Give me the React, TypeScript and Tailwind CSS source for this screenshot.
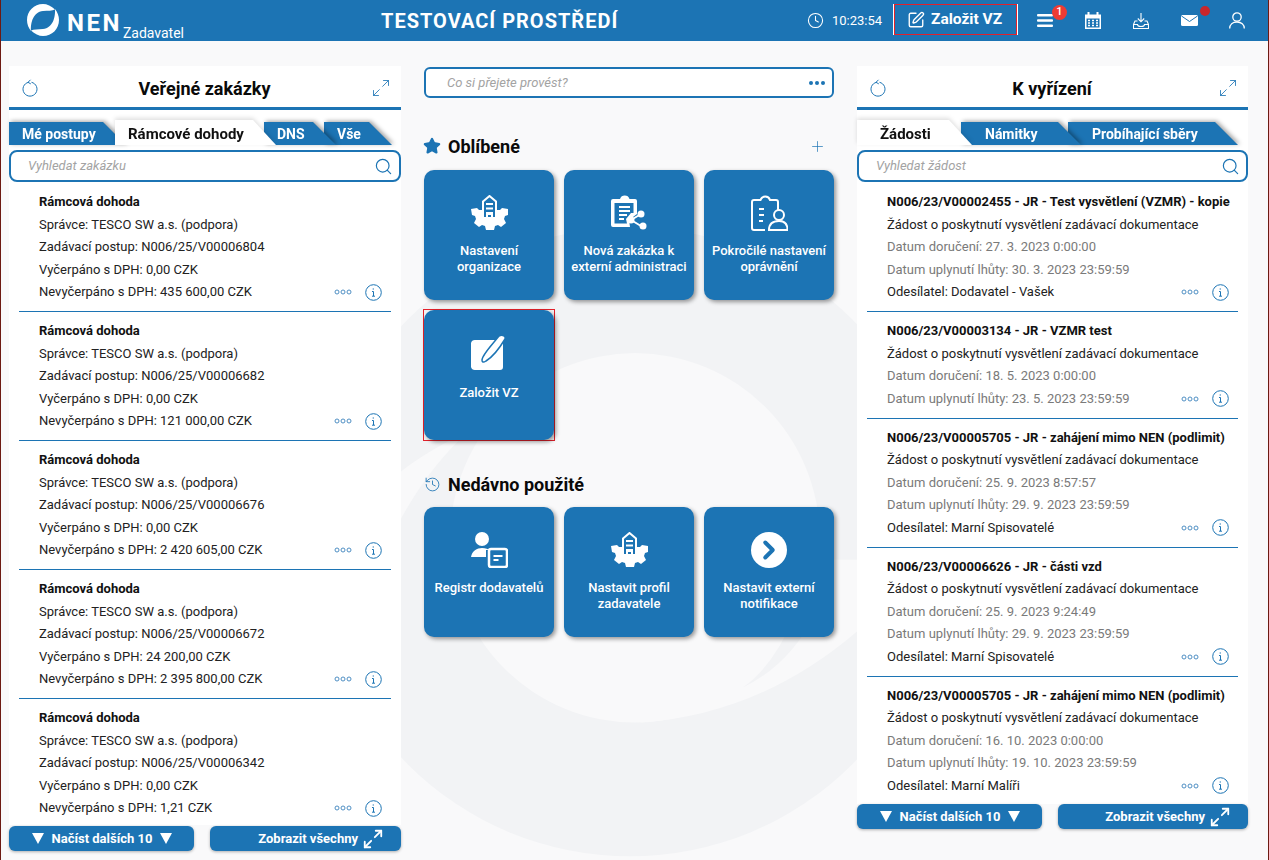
import { Clock, SquarePen, Search, Plus, Star, History, ChevronRight, Maximize2 } from 'lucide-react';

const BLUE = '#1c74b4';

type Row = { title: string; lines: string[]; last: string };

const leftRows: Row[] = [
  { title: 'Rámcová dohoda', lines: ['Správce: TESCO SW a.s. (podpora)', 'Zadávací postup: N006/25/V00006804', 'Vyčerpáno s DPH: 0,00 CZK'], last: 'Nevyčerpáno s DPH: 435 600,00 CZK' },
  { title: 'Rámcová dohoda', lines: ['Správce: TESCO SW a.s. (podpora)', 'Zadávací postup: N006/25/V00006682', 'Vyčerpáno s DPH: 0,00 CZK'], last: 'Nevyčerpáno s DPH: 121 000,00 CZK' },
  { title: 'Rámcová dohoda', lines: ['Správce: TESCO SW a.s. (podpora)', 'Zadávací postup: N006/25/V00006676', 'Vyčerpáno s DPH: 0,00 CZK'], last: 'Nevyčerpáno s DPH: 2 420 605,00 CZK' },
  { title: 'Rámcová dohoda', lines: ['Správce: TESCO SW a.s. (podpora)', 'Zadávací postup: N006/25/V00006672', 'Vyčerpáno s DPH: 24 200,00 CZK'], last: 'Nevyčerpáno s DPH: 2 395 800,00 CZK' },
  { title: 'Rámcová dohoda', lines: ['Správce: TESCO SW a.s. (podpora)', 'Zadávací postup: N006/25/V00006342', 'Vyčerpáno s DPH: 0,00 CZK'], last: 'Nevyčerpáno s DPH: 1,21 CZK' },
];

const ZADOST = 'Žádost o poskytnutí vysvětlení zadávací dokumentace';

const rightRows: { title: string; sub: string; dates: string[]; last?: string }[] = [
  { title: 'N006/23/V00002455 - JR - Test vysvětlení (VZMR) - kopie', sub: ZADOST, dates: ['Datum doručení: 27. 3. 2023 0:00:00', 'Datum uplynutí lhůty: 30. 3. 2023 23:59:59'], last: 'Odesílatel: Dodavatel - Vašek' },
  { title: 'N006/23/V00003134 - JR - VZMR test', sub: ZADOST, dates: ['Datum doručení: 18. 5. 2023 0:00:00', 'Datum uplynutí lhůty: 23. 5. 2023 23:59:59'] },
  { title: 'N006/23/V00005705 - JR - zahájení mimo NEN (podlimit)', sub: ZADOST, dates: ['Datum doručení: 25. 9. 2023 8:57:57', 'Datum uplynutí lhůty: 29. 9. 2023 23:59:59'], last: 'Odesílatel: Marní Spisovatelé' },
  { title: 'N006/23/V00006626 - JR - části vzd', sub: ZADOST, dates: ['Datum doručení: 25. 9. 2023 9:24:49', 'Datum uplynutí lhůty: 29. 9. 2023 23:59:59'], last: 'Odesílatel: Marní Spisovatelé' },
  { title: 'N006/23/V00005705 - JR - zahájení mimo NEN (podlimit)', sub: ZADOST, dates: ['Datum doručení: 16. 10. 2023 0:00:00', 'Datum uplynutí lhůty: 19. 10. 2023 23:59:59'], last: 'Odesílatel: Marní Malíři' },
];

function NenLogo() {
  const swoosh = 'M28 5.500C24.500 2 20 0 16 0 7 0 0 7 0 16c0 4 1.500 8 4 11-.5-8 2-19 12-20 5-.5 9 0 12-1.500z';
  return (
    <svg width="32" height="32" viewBox="0 0 32 32" fill="white" aria-hidden>
      <path d={swoosh} />
      <path d={swoosh} transform="rotate(180 16 16)" />
    </svg>
  );
}

// big faded logo behind the panels
function Watermark() {
  return (
    <svg className="absolute left-0 top-0 h-full w-full" viewBox="0 0 1269 860" aria-hidden>
      <circle cx="630" cy="542" r="315" fill="#f2f3f5" />
      <circle cx="635" cy="538" r="185" fill="#f9f9fa" />
      <path d="M640 723Q760 715 857 632L900 560H800z" fill="#f9f9fa" />
      <path d="M743 688Q790 665 815 615L795 615Q775 665 743 688z" fill="#f2f3f5" />
      <path d="M400 472Q425 452 470 430Q430 465 400 520z" fill="#f9f9fa" />
    </svg>
  );
}

function MenuBars() {
  return (
    <svg width="16" height="13" viewBox="0 0 16 13" fill="white" aria-hidden>
      <rect width="16" height="2.500" rx="1" />
      <rect y="5.250" width="16" height="2.500" rx="1" />
      <rect y="10.500" width="16" height="2.500" rx="1" />
    </svg>
  );
}

function CalendarIcon() {
  return (
    <svg width="16" height="17" viewBox="0 0 16 17" fill="none" aria-hidden>
      <path d="M0 2.500h16V17H0z" fill="white" />
      <path d="M3.500 0v4M12.500 0v4" stroke="white" strokeWidth="2" />
      <path d="M1.500 6.500h13v9h-13z" fill={BLUE} />
      <path d="M3 8.500h2M7 8.500h2M11 8.500h2M3 11h2M7 11h2M11 11h2M3 13.500h2M7 13.500h2M11 13.500h2" stroke="white" strokeWidth="1.300" />
    </svg>
  );
}

function TrayDownload() {
  return (
    <svg width="16" height="16" viewBox="0 0 16 16" fill="none" stroke="white" strokeWidth="1.100" aria-hidden>
      <path d="M8 0v8.500M4.800 5.500 8 8.800l3.200-3.300" />
      <path d="M4.500 8H2L.5 11.500V15.500h15v-4L14 8h-2.500" />
      <path d="M.5 11.500h4c0 1.500 1 2 3.500 2s3.500-.5 3.500-2h4" />
    </svg>
  );
}

function MailIcon() {
  return (
    <svg width="17" height="11" viewBox="0 0 17 11" fill="none" aria-hidden>
      <rect width="17" height="11" rx="1.500" fill="white" />
      <path d="M.5 1 8.500 6.500 16.500 1" stroke={BLUE} strokeWidth="1" />
    </svg>
  );
}

function UserIcon() {
  return (
    <svg width="16" height="17" viewBox="0 0 16 17" fill="none" stroke="white" strokeWidth="1.300" aria-hidden>
      <circle cx="8" cy="5" r="4.200" />
      <path d="M.7 16.500c0-4 3-6.500 7.300-6.500s7.300 2.500 7.300 6.500" />
    </svg>
  );
}

function RefreshIcon() {
  return (
    <svg width="16" height="18" viewBox="0 0 16 18" fill="none" stroke={BLUE} strokeWidth="1" aria-hidden>
      <path d="M6.500 3.300a7 7 0 1 0 3 0" />
      <path d="M8.500 .8 6 3.300l2.800 1.600" />
    </svg>
  );
}

function DotsOutline() {
  return (
    <svg width="18" height="6" viewBox="0 0 18 6" fill="none" stroke="#4f8fc4" strokeWidth="1" aria-hidden>
      <circle cx="3" cy="3" r="2" />
      <circle cx="9" cy="3" r="2" />
      <circle cx="15" cy="3" r="2" />
    </svg>
  );
}

function InfoCircle() {
  return (
    <svg width="17" height="17" viewBox="0 0 17 17" fill="none" stroke={BLUE} aria-hidden>
      <circle cx="8.500" cy="8.500" r="7.800" strokeWidth="1" />
      <path d="M7 7.500h1.500v4.500M7 12.200h3" strokeWidth="1" />
      <path d="M8.300 4.500v1" strokeWidth="1.300" />
    </svg>
  );
}

function GearBuilding() {
  return (
    <svg width="37" height="36" viewBox="0 0 37 36" fill="none" aria-hidden>
      <path d="M0 14l6-1 2 2h21l2-2 6 1v6l-3 1-1 3 2 4-5 4-3-2-3 1-1 4h-8l-1-4-3-1-3 2-5-4 2-4-1-3-3-1z" fill="white" />
      <path d="M12 6.500 18.500 1 25 6.500V23H12z" fill={BLUE} stroke="white" strokeWidth="2" />
      <path d="M15 9h7M15 13.500h7" stroke="white" strokeWidth="2.200" />
      <path d="M15 17h7v7h-2v-4h-3v4h-2z" fill="white" />
    </svg>
  );
}

function ClipboardShare() {
  return (
    <svg width="37" height="36" viewBox="0 0 37 36" fill="none" aria-hidden>
      <path d="M2 4h7a5 5 0 0 1 9.500 0H24a2 2 0 0 1 2 2v13l-8 6 1 7H2a2 2 0 0 1-2-2V6a2 2 0 0 1 2-2z" fill="white" />
      <path d="M3.500 8h19v10H20l-5 6 1 4.500H3.500z" fill={BLUE} />
      <path d="M8 12h11M8 16h11M8 20h8M8 24h5" stroke="white" strokeWidth="2" />
      <path d="M20 25l10-6M20 25l10 6" stroke="white" strokeWidth="2" />
      <circle cx="20" cy="25" r="3.500" fill="white" />
      <circle cx="30" cy="19" r="3.500" fill="white" />
      <circle cx="32" cy="31" r="3.500" fill="white" />
    </svg>
  );
}

function ClipboardUser() {
  return (
    <svg width="37" height="36" viewBox="0 0 37 36" fill="none" stroke="white" strokeWidth="2" aria-hidden>
      <path d="M14 35H3a2 2 0 0 1-2-2V7a2 2 0 0 1 2-2h6.500a5 5 0 0 1 9.500 0h6a2 2 0 0 1 2 2v8" />
      <path d="M8 14h5M8 20h5M8 26h4" />
      <circle cx="28" cy="20" r="5" />
      <path d="M18 35c0-6 4-9 10-9s8.500 3 8.500 9z" />
    </svg>
  );
}

function NotePen() {
  return (
    <svg width="36" height="36" viewBox="0 0 36 36" fill="none" aria-hidden>
      <path d="M4 5h26a2 2 0 0 1 2 2v25a3 3 0 0 1-3 3H4a4 4 0 0 1-4-3V8a4 4 0 0 1 4-3z" fill="white" />
      <path d="M11 25c0-5 9-14 17-24 4-2 7 1 6 3-6 10-14 19-19 22-3 2-4 1-4-1z" fill="white" stroke={BLUE} strokeWidth="1.500" />
    </svg>
  );
}

function UserCard() {
  return (
    <svg width="37" height="36" viewBox="0 0 37 36" fill="none" aria-hidden>
      <circle cx="11" cy="7" r="7" fill="white" />
      <path d="M0 25c1-6 6-9 11-9 4 0 6 1 7 2h-3v7z" fill="white" />
      <rect x="18" y="17" width="18" height="18" rx="2" stroke="white" strokeWidth="2.500" />
      <path d="M22.500 24h9M22.500 28h5" stroke="white" strokeWidth="2" />
    </svg>
  );
}

function ArrowCircle() {
  return (
    <span className="flex h-9 w-9 items-center justify-center rounded-full bg-white">
      <ChevronRight size={30} color={BLUE} strokeWidth={3.200} />
    </span>
  );
}

function Card({ icon, label }: { icon: React.ReactNode; label: React.ReactNode }) {
  return (
    <div className="h-[130px] w-[130px] rounded-[10px] bg-[#1c74b4] px-1 pt-[25px] text-center shadow-[2px_2px_4px_rgba(0,0,0,0.4)]">
      <div className="flex h-9 justify-center">{icon}</div>
      <div className="mt-[12px] text-[13px] font-medium leading-[16px] text-white">{label}</div>
    </div>
  );
}

function Tab({ label, width, pl, active, className }: { label: string; width: number; pl: number; active?: boolean; className: string }) {
  return (
    <div className={`relative ${className} ${active ? 'drop-shadow-[0_-2px_2px_rgba(0,0,0,0.12)]' : 'drop-shadow-[2px_-1px_2px_rgba(0,0,0,0.35)]'}`}>
      <div
        className={`font-bold [clip-path:polygon(0_0,calc(100%-23px)_0,100%_100%,0_100%)] ${active ? 'h-[25px] bg-white text-[15px] leading-[28px] text-[#111]' : 'h-[23px] bg-[#1c74b4] text-[14px] leading-[25px] text-white'}`}
        style={{ width, paddingLeft: pl }}
      >
        {label}
      </div>
    </div>
  );
}

function SearchBox({ placeholder }: { placeholder: string }) {
  return (
    <div className="flex h-8 items-center justify-between rounded-lg border-2 border-[#1c74b4] bg-white pl-[17px] pr-[6px]">
      <span className="text-[13px] italic text-[#a3a3a3]">{placeholder}</span>
      <Search size={19} color={BLUE} strokeWidth={1.500} />
    </div>
  );
}

function PanelHead({ title }: { title: string }) {
  return (
    <div className="flex h-[44px] items-center justify-between border-b-[3px] border-[#1c74b4] bg-white pl-[13px] pr-[10px] pt-[3px]">
      <RefreshIcon />
      <span className="text-[18px] font-bold text-[#0a0a0a]">{title}</span>
      <Maximize2 size={20} color={BLUE} strokeWidth={1} />
    </div>
  );
}

function RowActions() {
  return (
    <div className="flex items-center gap-[13px]">
      <DotsOutline />
      <InfoCircle />
    </div>
  );
}

function Buttons({ second, className }: { second: string; className?: string }) {
  return (
    <div className={`flex gap-[16px] text-[13px] font-bold text-white ${className ?? ''}`}>
      <div className="flex h-[25px] w-[185px] items-center justify-center gap-[8px] rounded-md bg-[#1c74b4] pl-px shadow-[0_1px_3px_rgba(0,0,0,0.3)]">
        <span className="h-0 w-0 border-x-[6.500px] border-t-[11px] border-x-transparent border-t-white" />
        Načíst dalších 10
        <span className="h-0 w-0 border-x-[6.500px] border-t-[11px] border-x-transparent border-t-white" />
      </div>
      <div className={`flex h-[25px] ${second} items-center justify-end gap-[4px] rounded-md bg-[#1c74b4] pr-[17px] shadow-[0_1px_3px_rgba(0,0,0,0.3)]`}>
        Zobrazit všechny
        <Maximize2 size={22} color="white" strokeWidth={2} />
      </div>
    </div>
  );
}

export default function App() {
  return (
    <div className="relative h-[860px] w-[1269px] overflow-hidden border-x border-x-[#6d1a12] bg-[#f9f9fa] font-['Roboto',sans-serif]">
      <Watermark />

      <header className="relative flex h-[41px] items-center bg-[#1c74b4] text-white">
        <div className="flex w-[380px] items-start pl-[26px]">
          <div className="pt-[3px]"><NenLogo /></div>
          <span className="ml-[8px] mt-[4px] text-[24px] font-bold tracking-[2.500px]">NEN</span>
          <span className="ml-[1px] mt-[24px] text-[14px] leading-[16px]">Zadavatel</span>
        </div>
        <div className="w-[426px] text-[20px] font-bold tracking-[1px]">TESTOVACÍ PROSTŘEDÍ</div>
        <div className="flex w-[87px] items-center gap-[8px]">
          <Clock size={17} strokeWidth={1.500} />
          <span className="text-[13px]">10:23:54</span>
        </div>
        <div className="mt-[4px] flex h-[31px] w-[123px] items-center gap-[6px] self-start border border-[#e3212b] pl-[12px] text-[15.500px] font-bold shadow-[-1px_0_0_white,1px_0_0_white]">
          <SquarePen size={18} strokeWidth={1.800} />
          Založit VZ
        </div>
        <div className="relative ml-[20px] w-[48px]">
          <MenuBars />
          <span className="absolute left-[15px] top-[-9px] flex h-[15px] w-[15px] items-center justify-center rounded-full bg-[#ee3b33] text-[11px] font-medium">1</span>
        </div>
        <div className="w-[48px]"><CalendarIcon /></div>
        <div className="w-[48px]"><TrayDownload /></div>
        <div className="relative w-[48px]">
          <MailIcon />
          <span className="absolute left-[19px] top-[-9px] h-[10px] w-[10px] rounded-full bg-[#c9262c]" />
        </div>
        <UserIcon />
      </header>

      <main className="relative flex items-start pl-[8px] pt-[25px]">
        <section className="w-[392px]">
          <PanelHead title="Veřejné zakázky" />
          <div className="bg-white pt-[10px]">
            <div className="flex items-end">
              <Tab label="Mé postupy" width={117} pl={13} className="z-20" />
              <Tab label="Rámcové dohody" width={161} pl={13} active className="z-30 ml-[-11px]" />
              <Tab label="DNS" width={72} pl={13} className="z-20 ml-[-12px]" />
              <Tab label="Vše" width={68} pl={13} className="z-10 ml-[-12px]" />
            </div>
            <div className="pt-[5px]"><SearchBox placeholder="Vyhledat zakázku" /></div>
            <div className="h-[643px] overflow-hidden px-[10px] pt-px">
              {leftRows.map((r, i) => (
                <div key={i} className="border-b border-b-[#1c74b4] pb-[7.500px] pl-[20px] pr-[9px] pt-2 text-[13px] leading-[22.500px] text-[#222] last:border-b-0">
                  <div className="font-bold text-[#111]">{r.title}</div>
                  {r.lines.map((l) => <div key={l}>{l}</div>)}
                  <div className="flex items-center justify-between">
                    <span>{r.last}</span>
                    <RowActions />
                  </div>
                </div>
              ))}
            </div>
          </div>
          <Buttons second="w-[191px]" className="mt-px" />
        </section>

        <section className="ml-[23px] w-[410px]">
          <div className="mt-px flex h-[31px] items-center justify-between rounded-md border-2 border-[#1c74b4] bg-white pl-[21px] pr-[7px]">
            <span className="text-[13px] italic text-[#a3a3a3]">Co si přejete provést?</span>
            <span className="flex gap-[2px]">
              <i className="h-1 w-1 rounded-full bg-[#1c74b4]" />
              <i className="h-1 w-1 rounded-full bg-[#1c74b4]" />
              <i className="h-1 w-1 rounded-full bg-[#1c74b4]" />
            </span>
          </div>

          <div className="mt-[35px] flex h-[26px] items-center">
            <Star size={18} color={BLUE} fill={BLUE} className="ml-[-1px]" />
            <span className="ml-[7px] text-[18px] font-bold text-[#0a0a0a]">Oblíbené</span>
            <Plus size={17} color={BLUE} strokeWidth={1} className="ml-auto mr-[8px]" />
          </div>
          <div className="mt-[11px] grid grid-cols-[130px_130px_130px] gap-x-[10px] gap-y-[10px]">
            <Card icon={<GearBuilding />} label={<>Nastavení<br />organizace</>} />
            <Card icon={<ClipboardShare />} label={<>Nová zakázka k<br />externí administraci</>} />
            <Card icon={<ClipboardUser />} label={<>Pokročilé nastavení<br />oprávnění</>} />
            <div className="-m-px h-[132px] w-[132px] border border-[#e3212b]">
              <Card icon={<NotePen />} label={<span className="relative top-[2px]">Založit VZ</span>} />
            </div>
          </div>

          <div className="mt-[31px] flex h-[26px] items-center">
            <History size={17} color={BLUE} strokeWidth={1.200} />
            <span className="ml-[7px] text-[18px] font-bold text-[#0a0a0a]">Nedávno použité</span>
          </div>
          <div className="mt-[10px] grid grid-cols-[130px_130px_130px] gap-x-[10px]">
            <Card icon={<UserCard />} label="Registr dodavatelů" />
            <Card icon={<GearBuilding />} label={<>Nastavit profil<br />zadavatele</>} />
            <Card icon={<ArrowCircle />} label={<>Nastavit externí<br />notifikace</>} />
          </div>
        </section>

        <section className="ml-[23px] w-[391px]">
          <PanelHead title="K vyřízení" />
          <div className="bg-white pt-[10px]">
            <div className="flex items-end">
              <Tab label="Žádosti" width={115} pl={23} active className="z-30" />
              <Tab label="Námitky" width={120} pl={24} className="z-20 ml-[-11px]" />
              <Tab label="Probíhající sběry" width={170} pl={24} className="z-10 ml-[-13px]" />
            </div>
            <div className="pt-[5px]"><SearchBox placeholder="Vyhledat žádost" /></div>
            <div className="h-[622px] overflow-hidden px-[10px] pt-px">
              {rightRows.map((r, i) => (
                <div key={i} className="border-b border-b-[#1c74b4] pb-[7.500px] pl-[20px] pr-[9px] pt-2 text-[13px] leading-[22.500px] text-[#222] last:border-b-0">
                  <div className="whitespace-nowrap font-bold text-[#111]">{r.title}</div>
                  <div>{r.sub}</div>
                  <div className="text-[#7a7a7a]">{r.dates[0]}</div>
                  <div className="flex items-center justify-between">
                    <span className="text-[#7a7a7a]">{r.dates[1]}</span>
                    {!r.last && <RowActions />}
                  </div>
                  {r.last && (
                    <div className="flex items-center justify-between">
                      <span>{r.last}</span>
                      <RowActions />
                    </div>
                  )}
                </div>
              ))}
            </div>
          </div>
          <Buttons second="w-[190px]" />
        </section>
      </main>
    </div>
  );
}
